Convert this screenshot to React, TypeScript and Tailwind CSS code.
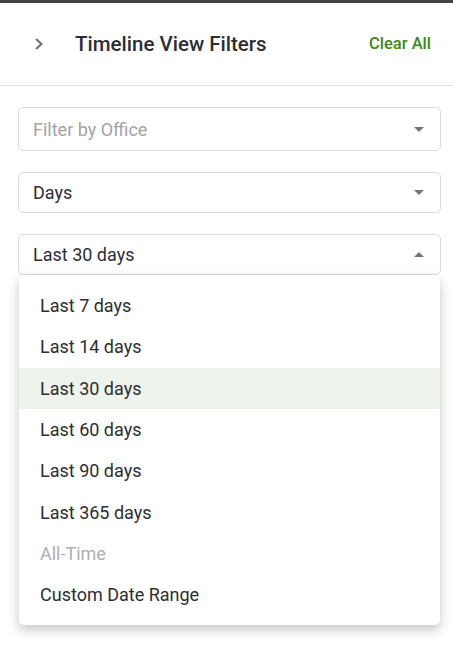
const options = [
  { label: 'Last 7 days' },
  { label: 'Last 14 days' },
  { label: 'Last 30 days', selected: true },
  { label: 'Last 60 days' },
  { label: 'Last 90 days' },
  { label: 'Last 365 days' },
  { label: 'All-Time', disabled: true },
  { label: 'Custom Date Range' },
];

function Caret({ up }: { up?: boolean }) {
  return (
    <svg width="10" height="5" viewBox="0 0 10 5" className="shrink-0">
      <path d={up ? 'M0 5 L5 0 L10 5 Z' : 'M0 0 L5 5 L10 0 Z'} fill="#757575" />
    </svg>
  );
}

function Select({ value, placeholder, open }: { value?: string; placeholder?: string; open?: boolean }) {
  return (
    <div className="flex h-[41px] items-center justify-between rounded-[5px] border border-[#dcdcdc] bg-white pl-[14px] pr-[16px]">
      <span className={`text-[18px] ${value ? 'text-[#2b2e35]' : 'text-[#a3a3a3]'}`}>{value ?? placeholder}</span>
      <Caret up={open} />
    </div>
  );
}

export default function App() {
  return (
    <div className="h-[658px] w-[453px] bg-white font-['Roboto',sans-serif]">
      <div className="h-[3px] bg-[#444]" />
      <div className="flex h-[83px] items-center border-b border-[#e3e3e3] pr-[22px]">
        <svg width="10" height="12" viewBox="0 0 10 12" className="ml-[34px]">
          <path d="M2 1 L7.5 6 L2 11" fill="none" stroke="#6e6e6e" strokeWidth="2" />
        </svg>
        <h1 className="ml-[31px] flex-1 text-[20.5px] font-medium text-[#2b2e35]">Timeline View Filters</h1>
        <button className="text-[16.5px] font-medium text-[#3a8a14]">Clear All</button>
      </div>
      <div className="flex flex-col gap-[21px] pl-[18px] pr-[12px] pt-[21px]">
        <div className="[&>div]:h-[44px]">
          <Select placeholder="Filter by Office" />
        </div>
        <Select value="Days" />
        <div className="relative">
          <Select value="Last 30 days" open />
          <ul className="absolute left-[1px] right-[1px] top-[41px] rounded-[5px] bg-white pb-[10px] pt-[10px] shadow-[0_5px_12px_rgba(0,0,0,0.22)]">
            {options.map((o) => (
              <li
                key={o.label}
                className={`flex h-[41.3px] items-center pl-[21px] text-[18px] ${
                  o.disabled ? 'text-[#b0b0b0]' : 'text-[#2b2e35]'
                } ${o.selected ? 'bg-[#eef3ec]' : ''}`}
              >
                {o.label}
              </li>
            ))}
          </ul>
        </div>
      </div>
    </div>
  );
}
